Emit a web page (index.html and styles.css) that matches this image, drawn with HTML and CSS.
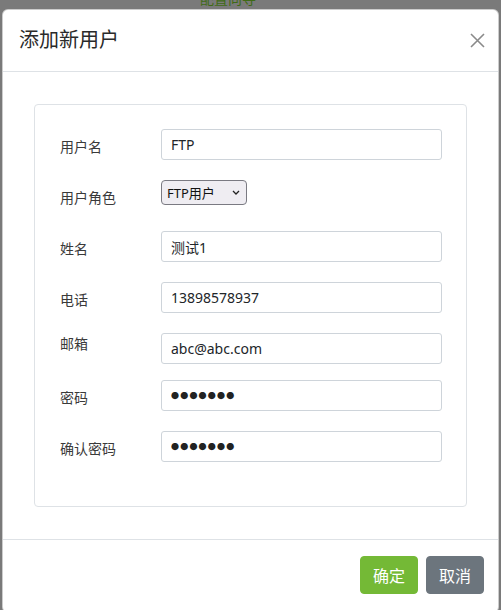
FILE: index.html
```html
<!DOCTYPE html>
<html lang="zh-CN">
<head>
  <meta charset="UTF-8">
  <meta name="viewport" content="width=device-width, initial-scale=1.0">
  <title>添加新用户</title>
  <link rel="stylesheet" href="styles.css">
</head>
<body>
  <div class="page-top"><span>配置向导</span></div>

  <div class="modal">
    <div class="modal-header">
      <h5 class="modal-title">添加新用户</h5>
      <button class="close" type="button" aria-label="Close">
        <svg width="15" height="15" viewBox="0 0 15 15"><path d="M1 1L14 14M14 1L1 14" stroke="#8a8a8a" stroke-width="1.6" fill="none"/></svg>
      </button>
    </div>

    <div class="modal-body">
      <div class="card">
        <div class="form-row">
          <label for="username">用户名</label>
          <input id="username" class="form-control" type="text" value="FTP">
        </div>
        <div class="form-row">
          <label for="role">用户角色</label>
          <div class="select-wrap">
            <select id="role" class="role-select">
              <option>FTP用户</option>
            </select>
            <svg class="chevron" width="8" height="5" viewBox="0 0 8 5"><path d="M1 1L4 4L7 1" stroke="#222" stroke-width="1.3" fill="none"/></svg>
          </div>
        </div>
        <div class="form-row">
          <label for="realname">姓名</label>
          <input id="realname" class="form-control" type="text" value="测试1">
        </div>
        <div class="form-row">
          <label for="phone">电话</label>
          <input id="phone" class="form-control" type="text" value="13898578937">
        </div>
        <div class="form-row row-tight">
          <label for="email">邮箱</label>
          <input id="email" class="form-control" type="text" value="abc@abc.com">
        </div>
        <div class="form-row">
          <label for="pwd">密码</label>
          <input id="pwd" class="form-control pwd" type="text" value="●●●●●●●">
        </div>
        <div class="form-row">
          <label for="pwd2">确认密码</label>
          <input id="pwd2" class="form-control pwd" type="text" value="●●●●●●●">
        </div>
      </div>
    </div>

    <div class="modal-footer">
      <button class="btn btn-success" type="button">确定</button>
      <button class="btn btn-secondary" type="button">取消</button>
    </div>
  </div>
</body>
</html>
```
FILE: styles.css
```css
body {
  margin: 0;
  background: #7a7a7a;
  font-family: "Noto Sans", "Noto Sans CJK SC", sans-serif;
  color: #212529;
  overflow: hidden;
}
.page-top {
  height: 9px;
  overflow: hidden;
  padding-left: 200px;
  color: #3f6a16;
  font-size: 14px;
  line-height: 14px;
}
.page-top span {
  display: block;
  margin-top: -8px;
}
.modal {
  margin-left: 2px;
  width: 495px;
  background: #fff;
  border: 1px solid rgba(0, 0, 0, 0.2);
  border-radius: 6px;
}
.modal-header {
  display: flex;
  justify-content: space-between;
  align-items: center;
  padding: 15px 13px 16px 16px;
  border-bottom: 1px solid #dee2e6;
}
.modal-title {
  margin: 0;
  font-size: 20px;
  line-height: 30px;
  font-weight: 400;
  color: #2a2a2a;
}
.close {
  background: none;
  border: none;
  padding: 0;
  display: flex;
  cursor: pointer;
}
.modal-body {
  padding: 32px 31px;
}
.card {
  border: 1px solid #dee2e6;
  border-radius: 4px;
  padding: 24px 24px 24px 25px;
}
.form-row {
  display: flex;
  align-items: flex-start;
  min-height: 31px;
  margin-bottom: 20px;
}
.form-row label {
  flex: none;
  width: 101px;
  padding-top: 8px;
  font-size: 14px;
  line-height: 20px;
  color: #3a3a3a;
}
.form-row.row-tight {
  margin-bottom: 16px;
}
.form-row.row-tight label {
  padding-top: 1px;
}
.form-control {
  flex: 1;
  min-width: 0;
  box-sizing: border-box;
  height: 31px;
  padding: 4px 9px;
  font-family: inherit;
  font-size: 14px;
  color: #212529;
  border: 1px solid #ced4da;
  border-radius: 3px;
  outline: none;
}
.form-control.pwd {
  font-size: 8px;
  letter-spacing: 1.2px;
  color: #222;
}
.select-wrap {
  position: relative;
  display: flex;
}
.role-select {
  appearance: none;
  -webkit-appearance: none;
  box-sizing: border-box;
  width: 86px;
  height: 25px;
  padding: 0 0 0 5px;
  font-family: inherit;
  font-size: 13px;
  color: #111;
  background: #efedf2;
  border: 1px solid #7a7a82;
  border-radius: 4px;
}
.chevron {
  position: absolute;
  left: 71px;
  top: 10px;
  pointer-events: none;
}
.modal-footer {
  display: flex;
  justify-content: flex-end;
  gap: 8px;
  padding: 16px 14px 18px 16px;
  border-top: 1px solid #dee2e6;
}
.btn {
  height: 38px;
  padding: 0 12px;
  font-family: inherit;
  font-size: 16px;
  color: #fff;
  border: 1px solid transparent;
  border-radius: 4px;
  cursor: pointer;
}
.btn-success {
  background: #74b936;
  border-color: #74b936;
}
.btn-secondary {
  background: #6c757d;
  border-color: #6c757d;
}
```
